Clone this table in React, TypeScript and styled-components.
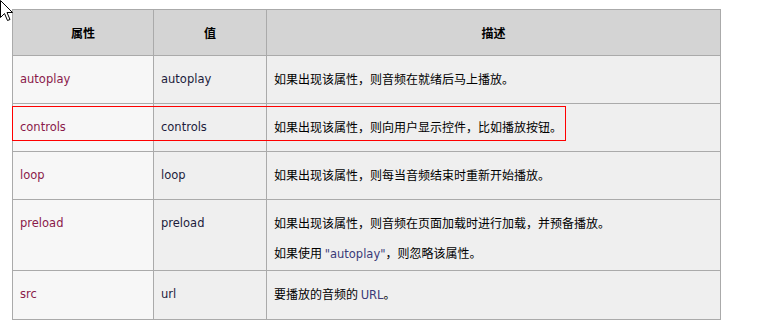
import React from 'react';
import styled, { createGlobalStyle } from 'styled-components';

const GlobalStyle = createGlobalStyle`
    html, body {
        margin: 0;
        padding: 0;
        background: #ffffff;
    }
    body {
        font-family: "DejaVu Sans", Verdana, "Noto Sans CJK SC", sans-serif;
        font-size: 12px;
        color: #000;
    }
`;

const Page = styled.div`
    position: relative;
    width: 767px;
    height: 322px;
    padding: 9px 0 0 12px;
    box-sizing: border-box;
`;

const Table = styled.table`
    border-collapse: collapse;
    table-layout: fixed;
    width: 709px;
    border: 1px solid #aaaaaa;
`;

// widths are content widths: column pitch minus 14px padding and 1px border
const HeadCell = styled.th<{ width?: number }>`
    width: ${props => props.width ? `${props.width}px` : 'auto'};
    background: #d4d4d4;
    border: 1px solid #aaaaaa;
    padding: 14px 7px 13px;
    line-height: 18px;
    font-family: "Noto Sans CJK SC", sans-serif;
    font-weight: bold;
    font-size: 12px;
    text-align: center;
`;

const Cell = styled.td<{ $tone?: 'light' | 'mid'; $tight?: boolean }>`
    background: ${props => props.$tone === 'light' ? '#f7f7f7' : '#efefef'};
    border: 1px solid #aaaaaa;
    padding: 14px 7px ${props => props.$tight ? '7px' : '15px'};
    line-height: 18px;
    vertical-align: top;
`;

const AttrName = styled.span`
    font-size: 11.5px;
    color: #8a1a4a;
`;

const Value = styled.span`
    font-size: 11.5px;
    color: #1c1c3c;
`;

const Para = styled.p`
    margin: 0;
    font-family: "Noto Sans CJK SC", sans-serif;

    & + & {
        margin-top: 12px;
    }
`;

const Code = styled.span`
    font-family: "DejaVu Sans", Verdana, sans-serif;
    font-size: 11.5px;
    color: #3a3a78;
`;

const Highlight = styled.div`
    position: absolute;
    left: 12px;
    top: 106px;
    width: 554px;
    height: 35px;
    border: 1px solid #ff0000;
    box-sizing: border-box;
    pointer-events: none;
`;

const Cursor = styled.svg`
    position: absolute;
    left: 0;
    top: 0;
`;

type Row = {
    name: string;
    value: string;
    desc: React.ReactNode[];
};

const rows: Row[] = [
    { name: 'autoplay', value: 'autoplay', desc: ['如果出现该属性，则音频在就绪后马上播放。'] },
    { name: 'controls', value: 'controls', desc: ['如果出现该属性，则向用户显示控件，比如播放按钮。'] },
    { name: 'loop', value: 'loop', desc: ['如果出现该属性，则每当音频结束时重新开始播放。'] },
    {
        name: 'preload',
        value: 'preload',
        desc: [
            '如果出现该属性，则音频在页面加载时进行加载，并预备播放。',
            <>如果使用 <Code>"autoplay"</Code>，则忽略该属性。</>,
        ],
    },
    { name: 'src', value: 'url', desc: [<>要播放的音频的 <Code>URL</Code>。</>] },
];

export default function App() {
    return (
        <Page>
            <GlobalStyle />
            <Table>
                <thead>
                    <tr>
                        <HeadCell width={126}>属性</HeadCell>
                        <HeadCell width={98}>值</HeadCell>
                        <HeadCell>描述</HeadCell>
                    </tr>
                </thead>
                <tbody>
                    {rows.map(row => {
                        const tight = row.desc.length > 1;
                        return (
                            <tr key={row.name}>
                                <Cell $tone="light" $tight={tight}><AttrName>{row.name}</AttrName></Cell>
                                <Cell $tone="mid" $tight={tight}><Value>{row.value}</Value></Cell>
                                <Cell $tone="mid" $tight={tight}>
                                    {row.desc.map((d, i) => <Para key={i}>{d}</Para>)}
                                </Cell>
                            </tr>
                        );
                    })}
                </tbody>
            </Table>
            <Highlight />
            <Cursor width="14" height="24" viewBox="0 0 14 24">
                <path d="M0.5 0.5 L0.5 17.5 L4.5 13.5 L7.5 20.5 L10 19.5 L7 12.5 L12.5 12.5 Z"
                    fill="#ffffff" stroke="#000000" strokeWidth="1" />
            </Cursor>
        </Page>
    );
}
